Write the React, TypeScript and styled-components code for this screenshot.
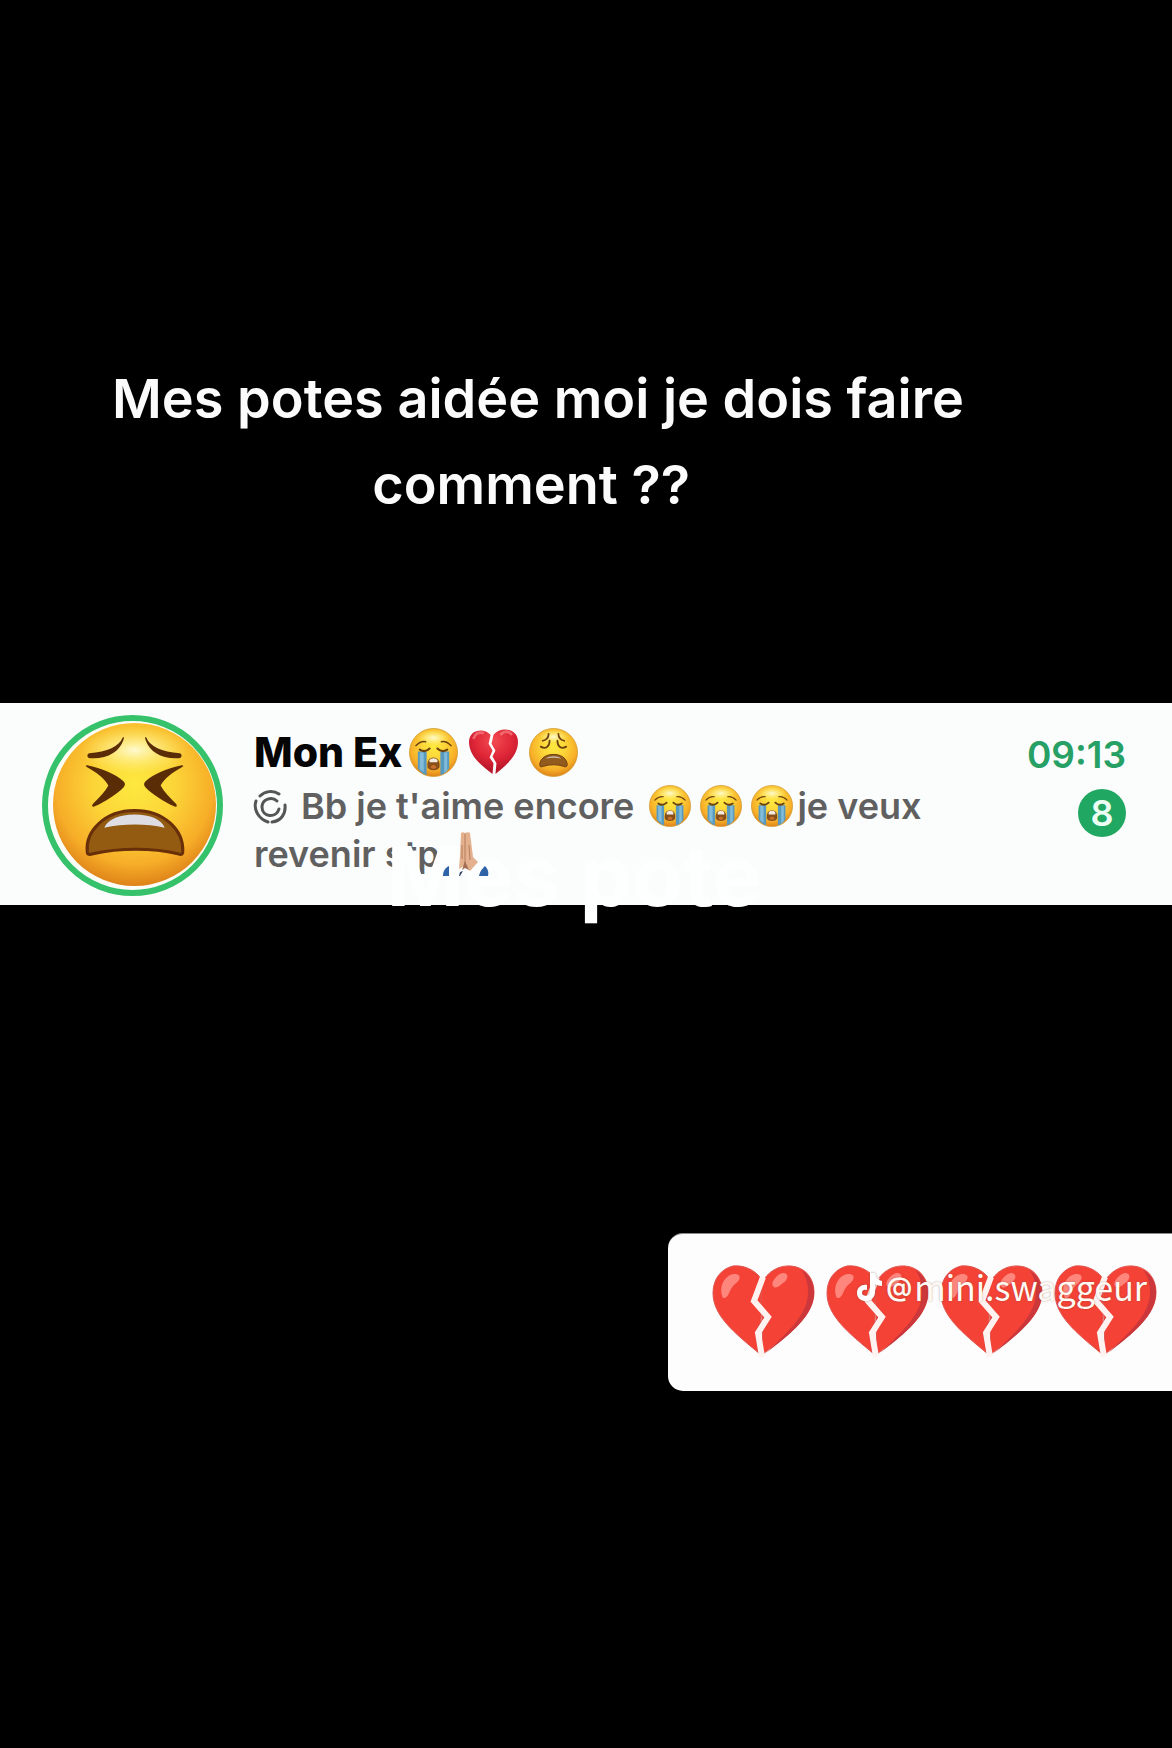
import React from "react";
import styled, { createGlobalStyle } from "styled-components";

const GlobalStyle = createGlobalStyle`
  *, *::before, *::after { box-sizing: border-box; }
  body { margin: 0; background: #000; font-family: Inter, "Liberation Sans", sans-serif; }
`;

const Page = styled.main`
  display: flex;
  flex-direction: column;
  min-height: 100vh;
  overflow: hidden;
  background: #000;
`;

const Caption = styled.h1`
  margin: 356px 96px 175px 0;
  color: #fbfbfb;
  font-size: 54px;
  font-weight: 600;
  line-height: 86px;
  text-align: center;
`;

const Strip = styled.section`
  position: relative;
  display: flex;
  align-items: flex-start;
  gap: 31px;
  padding: 12px 46px 9px 42px;
  background: #fbfcfc;
`;

const Ring = styled.div`
  flex: none;
  width: 181px;
  height: 181px;
  padding: 2px 0 0 5px;
  border: 6px solid #35c26b;
  border-radius: 50%;
  background: #fdfdf8;
`;

const Conversation = styled.div`
  flex: 1;
  min-width: 0;
  padding-top: 12px;
`;

const NameRow = styled.div`
  display: flex;
  align-items: center;
  gap: 11px;
  height: 50px;
`;

const Name = styled.h2`
  margin: 0 -4px 0 0;
  color: #050505;
  font-size: 41px;
  font-weight: 800;
  line-height: 50px;
`;

const Message = styled.p`
  margin: 5px 0 0;
  color: #606060;
  font-size: 36px;
  font-weight: 600;
  line-height: 48px;
`;

const Emoji = styled.svg<{ $size: number }>`
  display: block;
  flex: none;
  width: ${(p) => p.$size}px;
  height: ${(p) => p.$size}px;
  overflow: visible;
`;

const Inline = styled.span<{ $drop: number; $before?: number; $after?: number }>`
  display: inline-block;
  margin: 0 ${(p) => p.$after ?? 0}px 0 ${(p) => p.$before ?? 0}px;
  vertical-align: -${(p) => p.$drop}px;
`;

const Hands = styled(Inline)`
  position: relative;
  z-index: 2;
`;

const Meta = styled.div`
  display: flex;
  flex-direction: column;
  align-items: flex-end;
  gap: 12px;
  padding-top: 17px;
`;

const Time = styled.time`
  color: #27a065;
  font-size: 37px;
  font-weight: 600;
  line-height: 45px;
`;

const Badge = styled.span`
  display: grid;
  place-items: center;
  width: 48px;
  height: 48px;
  border-radius: 50%;
  background: #20a761;
  color: #ecfff4;
  font-size: 36px;
  font-weight: 600;
  line-height: 48px;
`;

const Ghost = styled.span`
  position: absolute;
  z-index: 1;
  top: 122px;
  left: 33%;
  color: #fdfefe;
  font-size: 83px;
  font-weight: 700;
  line-height: 102px;
  white-space: nowrap;
`;

const Card = styled.section`
  position: relative;
  display: flex;
  align-items: flex-start;
  align-self: flex-end;
  gap: 12px;
  width: 43%;
  margin-top: 328px;
  padding: 25px 0 30px 45px;
  border-top: 1px solid #8a8a8a;
  border-radius: 15px 0 0 15px;
  background: #fdfdfd;
`;

const Watermark = styled.a`
  position: absolute;
  top: 31px;
  right: 25px;
  display: flex;
  align-items: center;
  color: #fffaf4;
  font-family: "Noto Sans CJK SC", "Noto Sans", sans-serif;
  font-size: 34px;
  font-weight: 400;
  line-height: 44px;
  text-decoration: none;
  text-shadow: 0 0 2px rgba(90, 50, 40, 0.45);
`;

const At = styled.span`
  margin-right: 2px;
  font-family: Inter, sans-serif;
  font-size: 26px;
  font-weight: 600;
`;

const Note = styled.svg`
  width: 26px;
  height: 30px;
  margin-right: 4px;
  filter: drop-shadow(0 0 1px rgba(90, 50, 40, 0.45));
`;

function FaceGradient({ id }: { id: string }) {
  return (
    <defs>
      <radialGradient id={id} cx="50%" cy="38%" r="62%">
        <stop offset="0" stopColor="#fde93f" />
        <stop offset="0.4" stopColor="#fcd538" />
        <stop offset="0.78" stopColor="#f7ae28" />
        <stop offset="1" stopColor="#de8319" />
      </radialGradient>
      <radialGradient id={id + "-shine"}>
        <stop offset="0" stopColor="#fffbd8" stopOpacity="0.95" />
        <stop offset="1" stopColor="#fff27a" stopOpacity="0" />
      </radialGradient>
    </defs>
  );
}

function TiredFace() {
  return (
    <Emoji $size={163} viewBox="0 0 162 162" role="img" aria-label="Photo de profil">
      <FaceGradient id="tired" />
      <circle cx="81" cy="81" r="81" fill="url(#tired)" />
      <ellipse cx="81" cy="27" rx="54" ry="24" fill="url(#tired-shine)" />
      <g fill="#5b2d06">
        <path d="M69 15C66 23 54 29 36 30c-3 1-2 5 1 5 17 1 29-6 33-18 1-3 0-4-1-2zM93 15c3 8 15 14 33 15 3 1 2 5-1 5-17 1-29-6-33-18-1-3 0-4 1-2z" />
        <path d="M34 42c14 3 29 9 36 16 2 2 2 4 0 6-7 7-18 14-29 19-2 1-3-1-1-3 6-6 12-12 15-18-4-7-12-13-21-18-2-1-2-2 0-2zM128 42c-14 3-29 9-36 16-2 2-2 4 0 6 7 7 18 14 29 19 2 1 3-1 1-3-6-6-12-12-15-18 4-7 12-13 21-18 2-1 2-2 0-2z" />
      </g>
      <path d="M34 128c-2-20 17-41 47-41s49 20 48 41c0 3-2 3-5 2-25-6-58-6-84 0-4 1-6 1-6-2z" fill="#925b11" stroke="#692f08" strokeWidth="3" />
      <path d="M51 104c3-8 15-13 30-13 16 0 27 5 30 13-18-4-41-4-60 0z" fill="#dedde3" />
    </Emoji>
  );
}

function CryingFace({ size, id }: { size: number; id: string }) {
  return (
    <Emoji $size={size} viewBox="0 0 50 50" role="img" aria-label="Visage en pleurs">
      <FaceGradient id={id} />
      <circle cx="25" cy="25" r="24.5" fill={`url(#${id})`} stroke="#cf9a2c" strokeWidth="0.8" />
      <ellipse cx="25" cy="10" rx="17" ry="8" fill={`url(#${id}-shine)`} />
      <path d="M9 24h9v24C14 47 11 44 9 41zM32 24h9v17c-2 3-5 6-9 7z" fill="#579ac1" />
      <path d="M11 25h4v20l-4-3zM36 25h3v18l-3 3z" fill="#82bcd8" />
      <g fill="none" stroke="#6c4210" strokeLinecap="round">
        <path d="M7 18c3-3 6-5 10-4M43 18c-3-3-6-5-10-4" strokeWidth="1.4" />
        <path d="M11 22c3 2 7 2 10-1M39 22c-3 2-7 2-10-1" strokeWidth="2.2" />
      </g>
      <path d="M25 30c-5 0-7 5-6 10 1 4 11 4 12 0 1-5-1-10-6-10z" fill="#87501a" />
      <path d="M21 33c1-3 7-3 8 0v2h-8z" fill="#f4ece1" />
      <path d="M22 40c1-3 5-3 6 0-1 2-5 2-6 0z" fill="#c96f2b" />
    </Emoji>
  );
}

function WearyFace() {
  return (
    <Emoji $size={49} viewBox="0 0 50 50" role="img" aria-label="Visage épuisé">
      <FaceGradient id="weary" />
      <circle cx="25" cy="25" r="24.5" fill="url(#weary)" stroke="#cf9a2c" strokeWidth="0.8" />
      <ellipse cx="25" cy="9" rx="15" ry="7" fill="url(#weary-shine)" />
      <g fill="none" stroke="#6c4210" strokeLinecap="round" strokeWidth="1.8">
        <path d="M20 6c0 4-2 6-6 7M30 6c0 4 2 6 6 7M21 13c0 6-4 9-9 6M29 13c0 6 4 9 9 6" />
      </g>
      <path d="M11 37c1-7 7-10 14-10s13 3 14 10c0 3-2 3-4 2-6-2-14-2-20 0-3 1-4 1-4-2z" fill="#925b1d" stroke="#6b3a10" strokeWidth="1" />
      <path d="M17 31c4-3 12-3 16 0-5-1-11-1-16 0z" fill="#c8bdb2" />
    </Emoji>
  );
}

function GlossyHeart() {
  return (
    <Emoji $size={49} viewBox="0 0 50 50" role="img" aria-label="Cœur brisé">
      <defs>
        <radialGradient id="glossy" cx="50%" cy="25%" r="65%">
          <stop offset="0" stopColor="#f24b52" />
          <stop offset="0.6" stopColor="#df2637" />
          <stop offset="1" stopColor="#b9172a" />
        </radialGradient>
      </defs>
      <path d="M22 7C15-1 0 2 0 14c0 14 11 23 24 33l1-11-4-6 3-7-4-7zM25 7C32-2 50 0 50 14c0 14-12 24-23 33l1-11-4-7 3-6-4-7z" fill="url(#glossy)" />
      <path d="M5 10c1-4 5-6 9-5M33 6c3-3 7-3 10 0" fill="none" stroke="#fa8d8e" strokeWidth="3" strokeLinecap="round" opacity="0.6" />
    </Emoji>
  );
}

function FlatHeart() {
  return (
    <Emoji $size={102} viewBox="0 -6 102 102" role="img" aria-label="Cœur brisé">
      <path d="M49 15C42 4 30 0 20 1 8 4 0 14 0 28c0 22 20 39 47 61z" fill="#f44336" stroke="#df5550" strokeWidth="1" />
      <path d="M48 19C55 6 66 0 78 1c14 1 23 12 23 26 0 23-23 41-51 62z" fill="#f44336" stroke="#df5550" strokeWidth="1" />
      <path d="M88 5c9 5 13 13 13 23 0 22-22 40-48 60 23-22 42-39 42-61 0-9-2-16-7-22z" fill="#cb373a" />
      <path d="M39 35l12 17-9 15 3 21 2-20 9-16z" fill="#c33138" />
      <path d="M50 12L41 36 55 52 45 68 49 92" fill="none" stroke="#fff3f2" strokeWidth="6" />
      <path d="M10 33C5 23 11 10 21 9c9 0 6 7 0 11-5 4-5 14-11 13zM61 22c-5-3 3-14 10-14 6 1 3 8-1 10-3 2-6 6-9 4z" fill="#ff867c" />
    </Emoji>
  );
}

function FoldedHands() {
  return (
    <Emoji $size={46} viewBox="0 0 46 46" role="img" aria-label="Mains jointes">
      <path d="M19 1c1-1 3-1 4 0 2-1 4-1 5 0l3 24 5 5-8 9-6-5-5 3 1-13z" fill="#e3b18d" />
      <path d="M23 2v34M20 13v14M27 13l1 15" fill="none" stroke="#b77d5e" strokeWidth="1" />
      <path d="M23 29l-3 9 3-2 4 2z" fill="#a46f55" />
      <path d="M1 44c0-5 2-8 6-10v10zM37 44c1-5 3-7 6-10 3 3 4 6 3 10z" fill="#2e63a7" />
      <path d="M17 44l1-4 3-1-3 5z" fill="#344665" />
    </Emoji>
  );
}

function StatusIcon() {
  return (
    <Emoji $size={34} viewBox="0 0 34 34" aria-hidden="true">
      <g fill="none" stroke="#555" strokeWidth="3" strokeLinecap="round">
        <path d="M6 6C11 1 19 0 25 4M2 11c-3 9 3 18 12 21M18 32c9-1 14-8 13-17" />
        <path d="M23 11c-5-5-15-2-15 6 0 10 14 12 17 2" />
      </g>
    </Emoji>
  );
}

export default function App() {
  return (
    <>
      <GlobalStyle />
      <Page>
        <Caption>
          Mes potes aidée moi je dois faire
          <br />
          comment ??&nbsp;
        </Caption>
        <Strip>
          <Ring>
            <TiredFace />
          </Ring>
          <Conversation>
            <NameRow>
              <Name>Mon Ex</Name>
              <CryingFace size={49} id="cry-name" />
              <GlossyHeart />
              <WearyFace />
            </NameRow>
            <Message>
              <Inline $drop={5} $after={13}>
                <StatusIcon />
              </Inline>
              Bb je t'aime encore{" "}
              <Inline $drop={8} $before={6} $after={9}>
                <CryingFace size={42} id="cry-a" />
              </Inline>
              <Inline $drop={8} $after={9}>
                <CryingFace size={42} id="cry-b" />
              </Inline>
              <Inline $drop={8} $after={4}>
                <CryingFace size={42} id="cry-c" />
              </Inline>
              je veux revenir stp
              <Hands $drop={11} $before={2}>
                <FoldedHands />
              </Hands>
            </Message>
          </Conversation>
          <Meta>
            <Time>09:13</Time>
            <Badge>8</Badge>
          </Meta>
          <Ghost>Mes pote</Ghost>
        </Strip>
        <Card>
          <FlatHeart />
          <FlatHeart />
          <FlatHeart />
          <FlatHeart />
          <Watermark href="#mini.swaggeur">
            <Note viewBox="0 0 26 30" aria-hidden="true">
              <path d="M14 1h5c1 5 3 7 7 8v5c-3 0-5-1-7-2v8c0 12-18 12-18 1 0-6 5-9 10-8v5c-3-1-5 0-5 3 0 4 8 4 8-2z" fill="#fff" />
            </Note>
            <At>@</At>mini.swaggeur
          </Watermark>
        </Card>
      </Page>
    </>
  );
}
